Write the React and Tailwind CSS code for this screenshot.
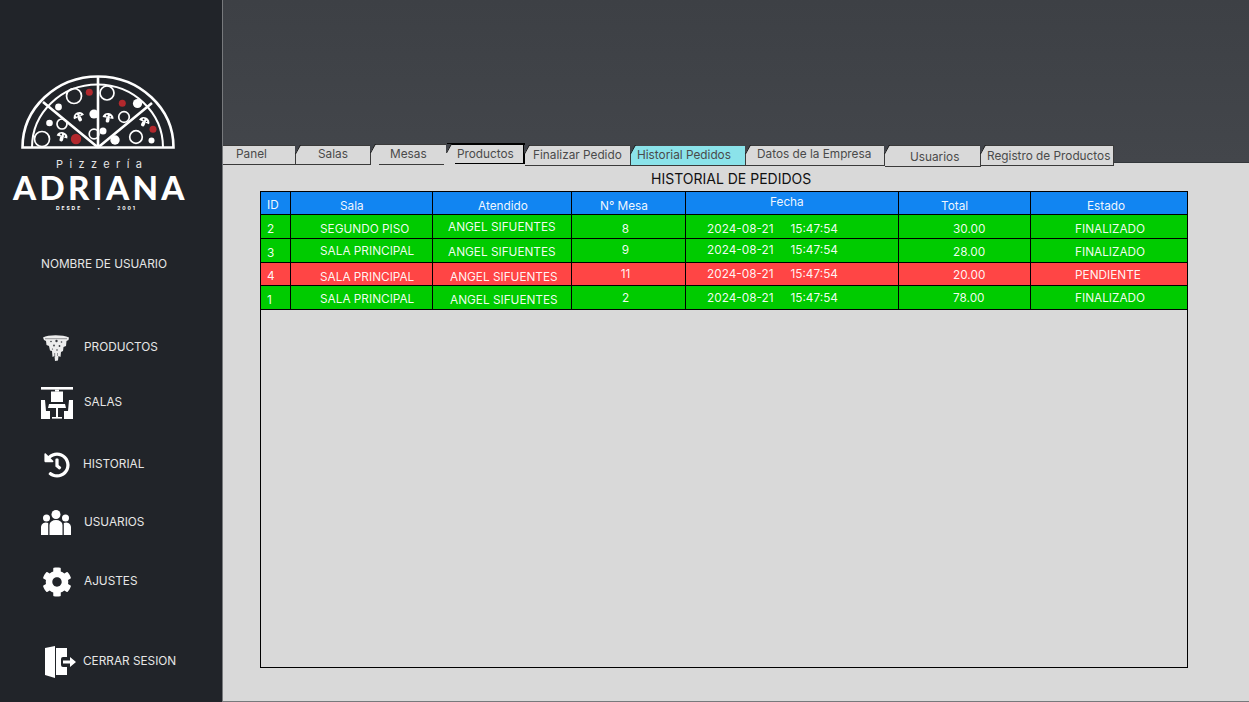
import React from 'react';
import { FaHistory, FaCog } from 'react-icons/fa';

const tabs = [
  { label: 'Panel', first: true, box: 'w-[73px] mt-[1px] h-[20px] pl-[13px] bg-[#d9d9d9] border-t border-r border-b border-[#3a3a3a]' },
  { label: 'Salas', box: 'w-[75px] mt-[1px] h-[20px] pl-[22px] bg-[#d9d9d9] border-t border-r border-b border-[#3a3a3a]' },
  { label: 'Mesas', box: 'w-[76px] mt-0 h-[21px] pl-[19px] pt-[1px] bg-[#d9d9d9] border-t border-[#3a3a3a]', line: 'left-[8px] right-[3px] bottom-0 h-px bg-[#3a3a3a]' },
  { label: 'Productos', box: 'w-[78px] -mt-[1px] h-[21px] pl-[10px] pt-[1px] bg-[#d9d9d9] border-t-2 border-r-2 border-black', line: 'left-[8px] right-0 bottom-0 h-px bg-black' },
  { label: 'Finalizar Pedido', box: 'w-[106px] mt-[1px] h-[21px] pl-[8px] pt-[1px] bg-[#d9d9d9] border-t border-r border-b border-[#3a3a3a]' },
  { label: 'Historial Pedidos', box: 'w-[115px] mt-[2px] h-[20px] pl-[6px] pt-[1px] bg-[#8be3ea] border-r border-b border-[#3a3a3a]' },
  { label: 'Datos de la Empresa', box: 'w-[139px] mt-[1px] h-[21px] pl-[11px] bg-[#d9d9d9] border-t border-r border-b border-[#3a3a3a]' },
  { label: 'Usuarios', box: 'w-[96px] mt-[1px] h-[22px] pl-[25px] pt-[3px] bg-[#d9d9d9] border-t border-r border-b border-[#3a3a3a]' },
  { label: 'Registro de Productos', box: 'w-[133px] mt-[1px] h-[21px] pl-[6px] pt-[2px] bg-[#d9d9d9] border-t border-r border-b border-[#3a3a3a]' },
];

const headers = [
  { label: 'ID', cls: 'pl-[6px] pt-[6px]' },
  { label: 'Sala', cls: 'pl-[49px] pt-[7px]' },
  { label: 'Atendido', cls: 'pl-[45px] pt-[7px]' },
  { label: 'N° Mesa', cls: 'pl-[28px] pt-[7px]' },
  { label: 'Fecha', cls: 'pl-[84px] pt-[3px]' },
  { label: 'Total', cls: 'pl-[42px] pt-[7px]' },
  { label: 'Estado', cls: 'pl-[56px] pt-[7px]' },
];

const rows = [
  { id: '2', sala: 'SEGUNDO PISO', at: 'pl-[15px] pt-[5px]', mesa: '8', mp: 'pt-[7px]', total: '30.00', estado: 'FINALIZADO', tp: 'pt-[7px]', ep: 'pt-[7px]', sp: 'pt-[7px]', ip: 'pt-[7px]', h: 'h-[24px]', bg: 'bg-[#00cb00]' },
  { id: '3', sala: 'SALA PRINCIPAL', at: 'pl-[15px] pt-[6px]', mesa: '9', mp: 'pt-[4px]', total: '28.00', estado: 'FINALIZADO', tp: 'pt-[6px]', ep: 'pt-[6px]', sp: 'pt-[5px]', ip: 'pt-[7px]', h: 'h-[24px]', bg: 'bg-[#00cb00]' },
  { id: '4', sala: 'SALA PRINCIPAL', at: 'pl-[17px] pt-[7px]', mesa: '11', mp: 'pt-[4px]', total: '20.00', estado: 'PENDIENTE', tp: 'pt-[5px]', ep: 'pt-[5px]', sp: 'pt-[7px]', ip: 'pt-[6px]', h: 'h-[23px]', bg: 'bg-[#ff4545]' },
  { id: '1', sala: 'SALA PRINCIPAL', at: 'pl-[17px] pt-[7px]', mesa: '2', mp: 'pt-[5px]', total: '78.00', estado: 'FINALIZADO', tp: 'pt-[5px]', ep: 'pt-[5px]', sp: 'pt-[6px]', ip: 'pt-[7px]', h: 'h-[24px]', bg: 'bg-[#00cb00]' },
];

const Mushroom = ({ x, y, r }) => (
  <g transform={`translate(${x} ${y}) rotate(${r})`} fill="#fff">
    <path d="M-5.500 0a5.500 5 0 0 1 11 0z" />
    <rect x="-1.800" y="-0.500" width="3.600" height="5" rx="1.500" />
    <circle cx="-1.500" cy="-2.200" r="0.900" fill="#212429" />
    <circle cx="2" cy="-1.600" r="0.700" fill="#212429" />
  </g>
);

const Logo = () => (
  <svg viewBox="0 0 196 84" className="w-[196px] h-[84px] block" fill="none" stroke="#fff">
    <g transform="translate(0 -70)">
      <path d="M22.500 147.500a75.500 71 0 0 1 151 0z" strokeWidth="2.600" />
      <path d="M32 147.500a65.500 63 0 0 1 131 0" strokeWidth="2" />
      <path d="M98 147.500V77M98 147.500L43 102M98 147.500L152 103" strokeWidth="2.600" />
      <g strokeWidth="1.700">
        <circle cx="74" cy="96" r="7.500" />
        <circle cx="107" cy="93" r="7" />
        <circle cx="124" cy="117" r="5.300" />
        <circle cx="62" cy="124" r="5" />
        <circle cx="42" cy="139" r="7.500" />
        <circle cx="94" cy="134" r="4.800" />
        <circle cx="136" cy="137" r="6.300" />
      </g>
      <g fill="#fff" stroke="none">
        <circle cx="58.500" cy="107" r="3.400" />
        <circle cx="49.500" cy="123" r="3.300" />
        <circle cx="94" cy="114" r="4.600" />
        <circle cx="137.500" cy="103.500" r="4.600" />
        <circle cx="103" cy="131" r="3.500" />
        <circle cx="115" cy="140" r="4.700" />
        <circle cx="151.500" cy="140.500" r="3" />
      </g>
      <g fill="#b2282d" stroke="none">
        <circle cx="89.300" cy="92.300" r="3.500" />
        <circle cx="122.300" cy="103.300" r="3.500" />
        <circle cx="76" cy="139" r="5.200" />
        <circle cx="153" cy="129.300" r="3.500" />
      </g>
      <g stroke="none">
        <Mushroom x={79} y={117} r={-25} />
        <Mushroom x={108} y={118} r={10} />
        <Mushroom x={144} y={122} r={25} />
        <Mushroom x={62} y={137} r={15} />
      </g>
    </g>
  </svg>
);

const PizzaIcon = () => (
  <svg viewBox="0 0 28 28" className="w-[28px] h-[28px]" fill="#ececec">
    <path d="M1 3.500C6 .5 21 .5 27 3.500l-.5 2.500-2 1L24 12l-2.500 1-.5 4-2 1-.5 5-2-1-.5 4.500-3 .5-.5-5-2 1-.5-6-2-.5L7 12l-2.500-1-.5-4-2-1z" />
    <g fill="#3a3d42">
      <rect x="3" y="4.600" width="22" height="0.500" />
      <circle cx="9" cy="7.500" r="0.800" />
      <circle cx="14.500" cy="7" r="1.200" />
      <circle cx="19.500" cy="8" r="0.800" />
      <circle cx="12" cy="11.500" r="0.900" />
      <circle cx="17.500" cy="12" r="0.900" />
      <circle cx="10.500" cy="15" r="0.600" />
      <circle cx="15" cy="16" r="0.800" />
      <rect x="12.500" y="19" width="0.600" height="4" />
      <rect x="15.200" y="19" width="0.500" height="3" />
    </g>
  </svg>
);

const SalasIcon = () => (
  <svg viewBox="0 0 32 32" className="w-[32px] h-[32px]" fill="#fff">
    <rect x="0" y="0" width="32" height="2.600" />
    <rect x="14" y="2.600" width="4" height="2" />
    <rect x="10" y="4.500" width="12" height="10.500" />
    <path d="M8 17h16l1 4H7z" />
    <rect x="15" y="21" width="2" height="9" />
    <rect x="11" y="30" width="10" height="1.600" />
    <path d="M0 13h4l1 11h4v8H0zM32 13h-4l-1 11h-4v8h9z" />
  </svg>
);

const UsersIcon = () => (
  <svg viewBox="0 0 30 26" className="w-[30px] h-[26px]" fill="#fff">
    <circle cx="15" cy="4.500" r="4.500" />
    <circle cx="5.500" cy="8" r="3.500" />
    <circle cx="24.500" cy="8" r="3.500" />
    <path d="M8.500 25V15a6.500 5 0 0 1 13 0v10z" />
    <path d="M0 25v-7a5 5 0 0 1 7.200-5v12zM30 25v-7a5 5 0 0 0-7.200-5v12z" />
  </svg>
);

const DoorIcon = () => (
  <svg viewBox="0 0 31 32" className="w-[31px] h-[32px]" fill="#fff">
    <path d="M0 2L10 0v32L0 29z" />
    <path d="M11 2h11v9h-4a2 2 0 0 0-2 2v6a2 2 0 0 0 2 2h4v8H11z" />
    <path d="M18 14.500h7V11l6 5-6 5v-3.500h-7z" />
  </svg>
);

const navItems = [
  { label: 'PRODUCTOS', icon: <PizzaIcon />, row: 'h-[28px] mt-[62px] pl-[42px]', text: 'pl-[14px]' },
  { label: 'SALAS', icon: <SalasIcon />, row: 'h-[32px] mt-[25px] pl-[41px]', text: 'pl-[11px]' },
  { label: 'HISTORIAL', icon: <FaHistory className="w-[26px] h-[26px] text-white" />, row: 'h-[26px] mt-[33px] pl-[44px]', text: 'pl-[13px]' },
  { label: 'USUARIOS', icon: <UsersIcon />, row: 'h-[26px] mt-[32px] pl-[41px]', text: 'pl-[13px]' },
  { label: 'AJUSTES', icon: <FaCog className="w-[30px] h-[30px] text-white" />, row: 'h-[30px] mt-[31px] pl-[42px]', text: 'pl-[12px]' },
  { label: 'CERRAR SESION', icon: <DoorIcon />, row: 'h-[32px] mt-[49px] pl-[45px]', text: 'pl-[7px]' },
];

export default function App() {
  return (
    <div className="flex w-[1249px] h-[702px] overflow-hidden font-['Inter',sans-serif] text-[11.8px]">
      <aside className="w-[222px] shrink-0 bg-[#212429] text-[#e6e6e6]">
        <div className="pt-[70px]">
          <Logo />
        </div>
        <p className="pl-[56px] text-[#e6e6e6] text-[11px] tracking-[0.58em] leading-[14px] mt-[3px] whitespace-nowrap">Pizzería</p>
        <p className="pl-[13px] mt-[4px] font-['Lato',sans-serif] font-black text-white text-[33px] tracking-[0.1em] leading-[24px] whitespace-nowrap">ADRIANA</p>
        <p className="pl-[56px] mt-[5px] text-[5px] font-bold text-white tracking-[0.38em] leading-[8px] whitespace-pre">{'DESDE     •     2001'}</p>
        <p className="pl-[41px] mt-[44px] leading-[16px]">NOMBRE DE USUARIO</p>
        <nav>
          {navItems.map((item) => (
            <div key={item.label} className={`flex items-center ${item.row}`}>
              {item.icon}
              <span className={item.text}>{item.label}</span>
            </div>
          ))}
        </nav>
      </aside>

      <main className="flex-1 flex flex-col bg-[#d9d9d9] border-l border-b border-[#77797c]">
        <div className="h-[163px] shrink-0 bg-gradient-to-b from-[#3d4045] to-[#43464b] border-b border-[#33373b]" />
        <div className="flex items-start -mt-[19px] h-[24px] text-[#4a4a4a]">
          {tabs.map((tab) => (
            <div key={tab.label} className={`relative shrink-0 whitespace-nowrap leading-[17px] ${tab.box}`}>
              {!tab.first && (
                <svg viewBox="0 0 6 9" className="absolute -left-[1px] -top-[1px] w-[6px] h-[9px]">
                  <path d="M0 0H5.500L0 9z" fill="#41444a" />
                  <path d="M5.500 0L0.500 9" stroke="#1a1a1a" strokeWidth="1" fill="none" />
                </svg>
              )}
              {tab.line && <span className={`absolute ${tab.line}`} />}
              {tab.label}
            </div>
          ))}
        </div>
        <h1 className="pl-[428px] mt-[2px] text-[14px] leading-[18px] text-[#111]">HISTORIAL DE PEDIDOS</h1>
        <div className="ml-[37px] mt-[3px] w-[928px] h-[477px] border border-black text-white/95">
          <div className="grid grid-cols-[30px_142px_139px_114px_213px_132px_1fr] h-[23px] bg-[#1185f2] border-b border-black">
            {headers.map((h) => (
              <div key={h.label} className={`border-r border-black last:border-r-0 whitespace-nowrap leading-[14px] ${h.cls}`}>{h.label}</div>
            ))}
          </div>
          {rows.map((r) => (
            <div key={r.id} className={`grid grid-cols-[30px_142px_139px_114px_213px_132px_1fr] ${r.h} ${r.bg} border-b border-black whitespace-nowrap leading-[14px]`}>
              <div className={`border-r border-black pl-[6px] ${r.ip}`}>{r.id}</div>
              <div className={`border-r border-black pl-[29px] ${r.sp}`}>{r.sala}</div>
              <div className={`border-r border-black ${r.at}`}>ANGEL SIFUENTES</div>
              <div className={`border-r border-black text-center pr-[6px] ${r.mp}`}>{r.mesa}</div>
              <div className={`border-r border-black pl-[21px] flex gap-[17px] ${r.mp}`}>
                <span>2024-08-21</span>
                <span>15:47:54</span>
              </div>
              <div className={`border-r border-black pl-[54px] ${r.tp}`}>{r.total}</div>
              <div className={`pl-[44px] ${r.ep}`}>{r.estado}</div>
            </div>
          ))}
        </div>
      </main>
    </div>
  );
}
